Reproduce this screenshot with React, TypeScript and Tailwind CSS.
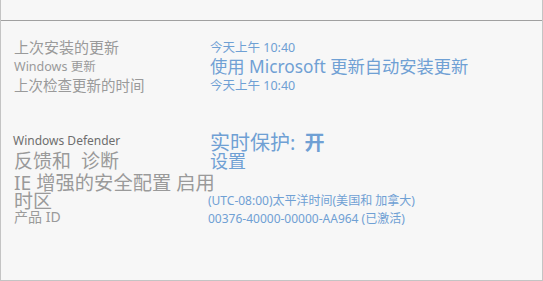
import React from 'react';

const font = { fontFamily: '"Noto Sans", "Noto Sans CJK SC", sans-serif' };

const Row: React.FC<{ h: string; left?: React.ReactNode; right?: React.ReactNode }> = ({ h, left, right }) => (
  <div className={`flex items-start ${h}`}>
    <div className="w-[196px] shrink-0 whitespace-nowrap">{left}</div>
    <div className="whitespace-nowrap">{right}</div>
  </div>
);

export default function App() {
  return (
    <div
      className="w-[543px] h-[281px] bg-[#f7f7f7] border-l border-r border-b border-[#c4c4c4] overflow-hidden"
      style={font}
    >
      <div className="h-[20px]" />
      <div className="h-px bg-[#a0a0a0]" />
      <div className="pl-[13px] pt-[17px]">
        <Row
          h="h-[19px]"
          left={<div className="text-[15px] leading-[19px] text-[#9a9a9a]">上次安装的更新</div>}
          right={<div className="text-[12.5px] leading-[19px] text-[#6fa0d4]">今天上午 10:40</div>}
        />
        <Row
          h="h-[19px]"
          left={<div className="text-[12.5px] leading-[19px] text-[#9a9a9a]">Windows 更新</div>}
          right={<div className="text-[17.3px] leading-[19px] text-[#6fa0d4]">使用 Microsoft 更新自动安装更新</div>}
        />
        <Row
          h="h-[19px]"
          left={<div className="text-[14.5px] leading-[19px] text-[#9a9a9a]">上次检查更新的时间</div>}
          right={<div className="text-[12.5px] leading-[19px] text-[#6fa0d4]">今天上午 10:40</div>}
        />
        <div className="h-[35px]" />
        <Row
          h="h-[23px]"
          left={<div className="text-[12px] leading-[21px] text-[#6e6e6e] -ml-[1px]">Windows Defender</div>}
          right={
            <div className="text-[20px] leading-[20px] text-[#6fa0d4] mt-[3px]">
              实时保护:<span className="font-bold ml-[9px]">开</span>
            </div>
          }
        />
        <Row
          h="h-[20px]"
          left={<div className="text-[19px] leading-[17px] text-[#9a9a9a]">反馈和&nbsp;&nbsp;诊断</div>}
          right={<div className="text-[18px] leading-[17px] text-[#6fa0d4]">设置</div>}
        />
        <Row
          h="h-[20px]"
          left={<div className="text-[19.3px] leading-[20px] text-[#9a9a9a]">IE 增强的安全配置 启用</div>}
        />
        <Row
          h="h-[16px]"
          left={<div className="text-[19px] leading-[16px] text-[#9a9a9a]">时区</div>}
          right={<div className="text-[12px] leading-[13px] text-[#6fa0d4] -ml-[2px] mt-px">(UTC-08:00)太平洋时间(美国和 加拿大)</div>}
        />
        <Row
          h="h-[17px]"
          left={<div className="text-[14px] leading-[15px] text-[#9a9a9a]">产品 ID</div>}
          right={<div className="text-[12px] leading-[15px] text-[#6fa0d4] -ml-[2px] mt-[2px]">00376-40000-00000-AA964 (已激活)</div>}
        />
      </div>
    </div>
  );
}
